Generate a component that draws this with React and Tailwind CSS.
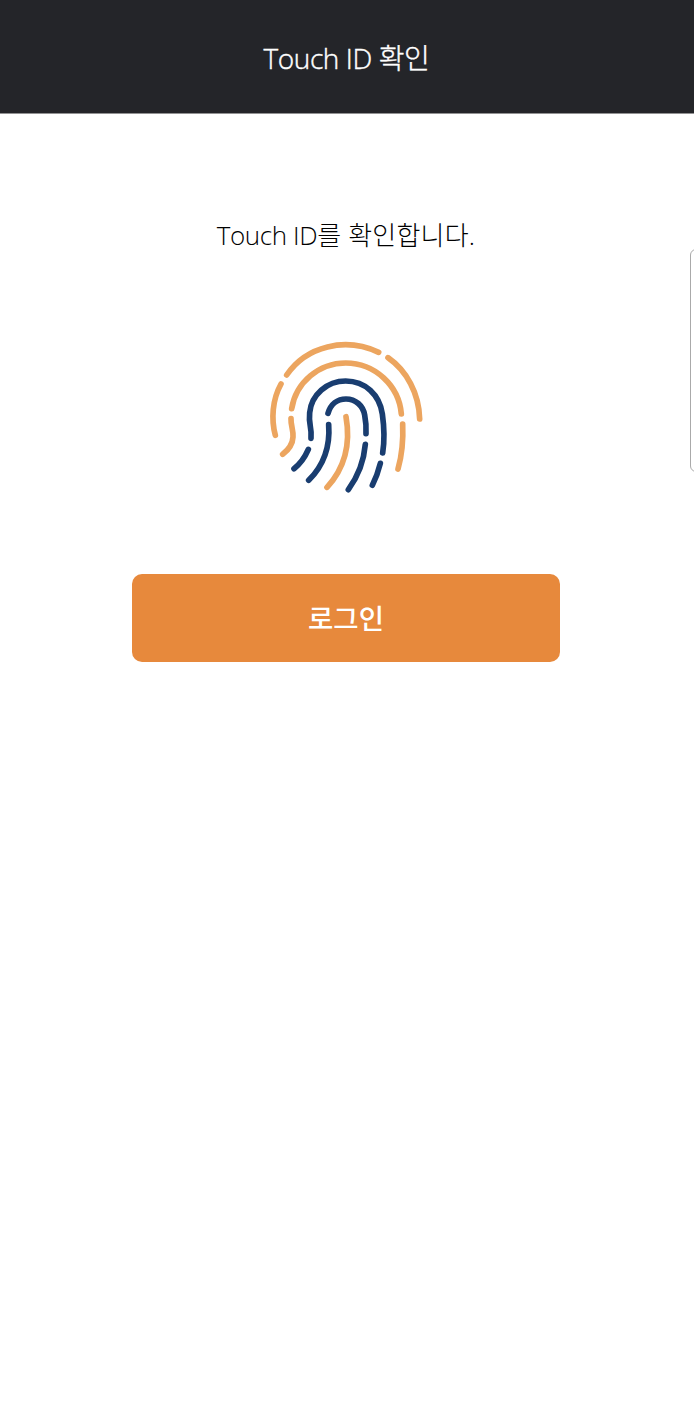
const ORANGE = '#eca55f';
const NAVY = '#193d70';

// Ridges of the fingerprint, outermost first
const ridges = [
  { color: ORANGE, d: 'M80 129C139 42 256 14 356 61' },
  { color: ORANGE, d: 'M384 77C440 116 477 184 479 261' },
  { color: ORANGE, d: 'M63 156C37 203 33 261 46 310' },
  { color: ORANGE, d: 'M95 230C108 151 177 93 257 93C345 93 417 161 424 246' },
  { color: ORANGE, d: 'M93 260C92 281 101 296 99 315C98 335 86 353 68 367' },
  { color: ORANGE, d: 'M428 276C430 321 426 369 414 411' },
  { color: NAVY, d: 'M153 319C156 281 145 282 149 242C154 188 201 147 257 147C316 147 359 189 367 246C373 288 374 325 368 363' },
  { color: NAVY, d: 'M145 352C135 375 121 395 102 410' },
  { color: NAVY, d: 'M361 394C355 418 347 440 337 460' },
  { color: NAVY, d: 'M204 244C212 217 232 201 258 201C287 201 309 221 314 249C318 270 319 287 318 305' },
  { color: NAVY, d: 'M206 278C211 345 190 401 146 445' },
  { color: NAVY, d: 'M316 337C312 385 295 432 265 473' },
  { color: ORANGE, d: 'M258 254C273 339 253 409 201 466' },
];

const FingerprintIcon = () => (
  <svg viewBox="0 0 510 510" className="h-[170px] w-[170px]" fill="none" aria-hidden="true">
    {ridges.map((ridge) => (
      <path
        key={ridge.d}
        d={ridge.d}
        stroke={ridge.color}
        strokeWidth="17"
        strokeLinecap="round"
      />
    ))}
  </svg>
);

const Header = () => (
  <header className="flex h-[114px] items-center justify-center border-b border-[#929293] bg-[#242529] pt-0.5 pr-px">
    <h1 className="text-[28px] font-light leading-10 tracking-[-0.4px] whitespace-nowrap text-white [-webkit-text-stroke:0.4px_white]">
      Touch ID 확인
    </h1>
  </header>
);

function App() {
  return (
    <div className="relative min-h-screen overflow-hidden bg-white font-['Open_Sans','Noto_Sans_CJK_KR',sans-serif]">
      <Header />

      <main className="flex flex-col items-center pr-[2px]">
        <p className="mt-[101px] text-[26px] font-light leading-10 tracking-[0.2px] whitespace-nowrap text-black">
          <span className="tracking-[-0.4px]">Touch ID</span>를 확인합니다.
        </p>
        <div className="mt-[77px] ml-[-2px]">
          <FingerprintIcon />
        </div>
        <button
          type="button"
          className="mt-[72px] h-[88px] w-[428px] rounded-[10px] bg-[#e7893c] pt-0.5 text-[27.5px] font-medium text-white"
        >
          로그인
        </button>
      </main>

      {/* Edge panel handle */}
      <div className="absolute top-[249px] -right-2 h-[223px] w-3 rounded-lg border border-[#aaaaaa] bg-white" />
    </div>
  );
}

export default App;
